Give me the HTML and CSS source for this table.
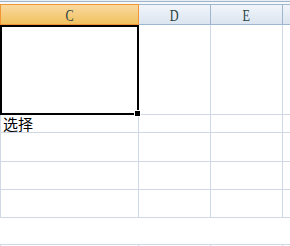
FILE: index.html
```html
<!DOCTYPE html>
<html lang="zh">
<head>
    <meta charset="UTF-8">
    <meta name="viewport" content="width=device-width, initial-scale=1.0">
    <title>选择</title>
    <link rel="stylesheet" href="styles.css">
</head>
<body>
    <div class="sheet">
        <div class="edge"></div>
        <div class="row head">
            <div class="cell c active"><span>C</span></div>
            <div class="cell d"><span>D</span></div>
            <div class="cell e"><span>E</span></div>
            <div class="cell f"></div>
        </div>
        <div class="row r1">
            <div class="cell c selected"><span class="handle"></span></div>
            <div class="cell d"></div>
            <div class="cell e"></div>
            <div class="cell f"></div>
        </div>
        <div class="row r2">
            <div class="cell c">选择</div>
            <div class="cell d"></div>
            <div class="cell e"></div>
            <div class="cell f"></div>
        </div>
        <div class="row r3">
            <div class="cell c"></div>
            <div class="cell d"></div>
            <div class="cell e"></div>
            <div class="cell f"></div>
        </div>
        <div class="row r4">
            <div class="cell c"></div>
            <div class="cell d"></div>
            <div class="cell e"></div>
            <div class="cell f"></div>
        </div>
        <div class="row r4">
            <div class="cell c"></div>
            <div class="cell d"></div>
            <div class="cell e"></div>
            <div class="cell f"></div>
        </div>
        <div class="gap"></div>
        <div class="row last">
            <div class="cell c"></div>
            <div class="cell d"></div>
            <div class="cell e"></div>
            <div class="cell f"></div>
        </div>
    </div>
</body>
</html>
```

FILE: styles.css
```css
body {
    margin: 0;
    background: #fff;
    font-family: "Noto Sans CJK SC", sans-serif;
}
.sheet {
    width: 290px;
    height: 246px;
    overflow: hidden;
}
.edge {
    height: 4px;
    background: linear-gradient(#e9eef4 0, #e9eef4 1px, #9fb4cc 1px, #9fb4cc 2px, #f5f8fb 2px);
}
.row {
    display: flex;
}
.cell {
    box-sizing: border-box;
    flex: none;
    border-right: 1px solid #d0d7e5;
    border-bottom: 1px solid #d0d7e5;
}
.cell.c {
    width: 139px;
    border-left: 1px solid #d0d7e5;
}
.cell.d, .cell.e {
    width: 72px;
}
.cell.f {
    flex: 1;
    border-right: none;
}

/* column headers */
.head .cell {
    height: 21px;
    border-top: 1px solid #9eb6ce;
    border-bottom-color: #9eb6ce;
    border-right-color: #9eb6ce;
    background: linear-gradient(#f1f5fa, #dbe4f0);
    font-family: "Liberation Serif", "DejaVu Serif", serif;
    font-size: 17px;
    line-height: 22px;
    color: #27413e;
    text-align: center;
}
.head .cell span {
    display: inline-block;
    transform: scaleX(0.72);
}
.head .cell.active {
    border-color: #f29536;
    background: linear-gradient(#f9d99f, #f1c15f);
}

.r1 .cell { height: 90px; }
.r2 .cell { height: 18px; }
.r3 .cell { height: 29px; }
.r4 .cell { height: 28px; }
.last .cell {
    height: 20px;
    border-top: 1px solid #d0d7e5;
}
.gap {
    height: 26px;
}

.r2 .cell.c {
    padding-left: 2px;
    font-size: 15px;
    line-height: 17px;
    color: #000;
}

.cell.selected {
    position: relative;
    border: 2px solid #000;
}
.handle {
    position: absolute;
    right: -3px;
    bottom: -3px;
    width: 5px;
    height: 5px;
    background: #000;
    box-shadow: 0 0 0 1px #fff;
}
```
